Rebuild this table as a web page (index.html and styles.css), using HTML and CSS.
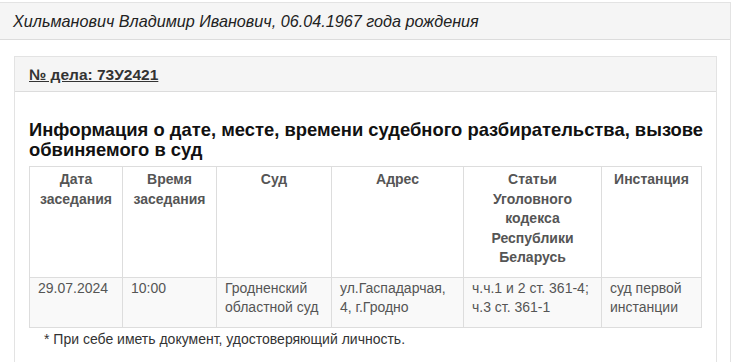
FILE: index.html
```html
<!DOCTYPE html>
<html lang="ru">
<head>
<meta charset="utf-8">
<title>Дело</title>
<link rel="stylesheet" href="styles.css">
</head>
<body>
<div class="panel outer">
  <div class="panel-heading outer-heading">Хильманович Владимир Иванович, 06.04.1967 года рождения</div>
  <div class="outer-body">
    <div class="panel inner">
      <div class="panel-heading inner-heading"><a class="case-link" href="#">№ дела: 73У2421</a></div>
      <div class="inner-body">
        <h3 class="title">Информация о дате, месте, времени судебного разбирательства, вызове обвиняемого в суд</h3>
        <table class="court-table">
          <colgroup>
            <col class="c1"><col class="c2"><col class="c3"><col class="c4"><col class="c5"><col class="c6">
          </colgroup>
          <thead>
            <tr>
              <th>Дата заседания</th>
              <th>Время заседания</th>
              <th>Суд</th>
              <th>Адрес</th>
              <th>Статьи Уголовного кодекса Республики Беларусь</th>
              <th>Инстанция</th>
            </tr>
          </thead>
          <tbody>
            <tr>
              <td>29.07.2024</td>
              <td>10:00</td>
              <td>Гродненский областной суд</td>
              <td>ул.Гаспадарчая, 4, г.Гродно</td>
              <td>ч.ч.1 и 2 ст. 361-4; ч.3 ст. 361-1</td>
              <td>суд первой инстанции</td>
            </tr>
          </tbody>
        </table>
        <p class="note">* При себе иметь документ, удостоверяющий личность.</p>
      </div>
    </div>
  </div>
</div>
</body>
</html>
```
FILE: styles.css
```css
html, body {
  margin: 0;
  padding: 0;
  background: #fff;
}
body {
  padding-top: 2px;
  font-family: "Liberation Sans", Arial, sans-serif;
  font-size: 14px;
  line-height: 20px;
  color: #333;
  overflow: hidden;
}
.panel {
  border: 1px solid #e3e3e3;
  background: #fff;
}
.outer {
  margin-left: -1px;
  width: 730px;
  height: 400px;
}
.panel-heading {
  background: #f5f5f5;
  border-bottom: 1px solid #dcdcdc;
}
.outer-heading {
  height: 37px;
  box-sizing: border-box;
  padding: 8px 12px 0 13px;
  font-style: italic;
  font-size: 16.2px;
  line-height: 21px;
  color: #222;
}
.outer-body {
  padding: 16px 13px 0 14px;
}
.inner {
  height: 400px;
}
.inner-heading {
  height: 35px;
  box-sizing: border-box;
  padding: 8px 14px 0 14px;
  font-size: 15.5px;
  line-height: 20px;
}
.case-link {
  color: #333;
  font-weight: 600;
  text-decoration: underline;
}
.inner-body {
  padding: 28px 14px 0 14px;
}
.title {
  margin: 0 -10px 6px 0;
  font-size: 18.4px;
  line-height: 20px;
  font-weight: bold;
  color: #111;
}
.court-table {
  border-collapse: collapse;
  width: 672px;
  table-layout: fixed;
}
.c1 { width: 93px; }
.c2 { width: 94px; }
.c3 { width: 115px; }
.c4 { width: 132px; }
.c5 { width: 138px; }
.c6 { width: 100px; }
.court-table th,
.court-table td {
  border: 1px solid #ddd;
  vertical-align: top;
  padding: 1px 8px 9px 8px;
  line-height: 19.5px;
}
.court-table th {
  font-weight: bold;
  color: #555;
  text-align: center;
  background: #fff;
  padding-top: 3px;
  padding-bottom: 9px;
}
.court-table td {
  color: #555;
  background: #f9f9f9;
  text-align: left;
}
.note {
  margin: 1px 0 0 0;
  padding-left: 15px;
  color: #333;
}
```
